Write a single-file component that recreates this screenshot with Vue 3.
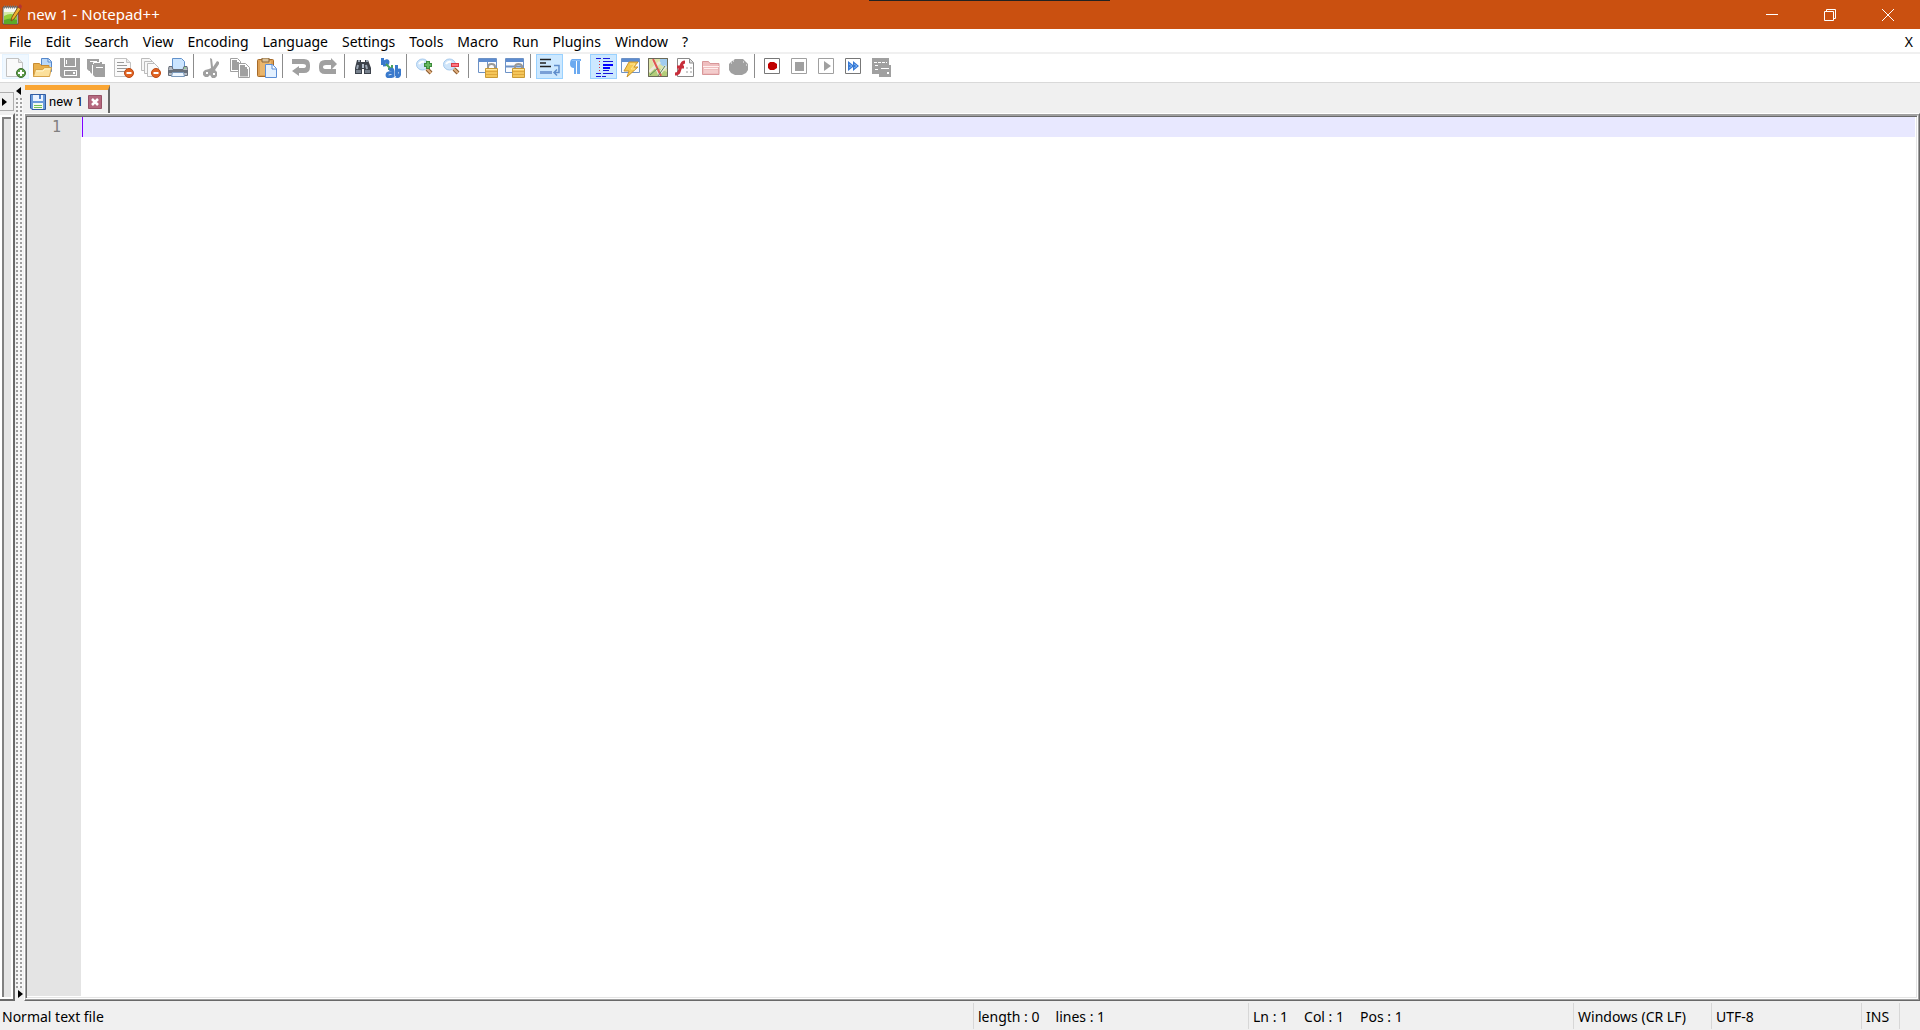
<script setup>
import { ref } from 'vue'

const menus = ['File', 'Edit', 'Search', 'View', 'Encoding', 'Language', 'Settings', 'Tools', 'Macro', 'Run', 'Plugins', 'Window', '?']
const text = ref('')

const page = '<path d="M.5.5h12l4 4v14H.5z" fill="#fafafa" stroke="#c2c2c2"/><path d="M12.5.5v4h4" fill="#e6e6e6" stroke="#c2c2c2"/>'
const minusBadge = '<circle cx="15" cy="15" r="4.500" fill="#e06423" stroke="#bd4812"/><path d="M12.500 15h5" stroke="#fff" stroke-width="2"/>'
const lens = '<ellipse cx="6.500" cy="6.500" rx="6" ry="5.500" fill="#cfe5fa" stroke="#a4c8ec"/><path d="M3 6q2-3 5-2" stroke="#fff" stroke-width="2" fill="none"/><path d="M11 11l4 4" stroke="#8c5a2c" stroke-width="4"/><path d="M11 11l4 4" stroke="#e0b080" stroke-width="2"/>'
const lock = '<path d="M10 11V9q0-3 3.500-3t3.500 3v2" fill="none" stroke="#999" stroke-width="2"/><path d="M7.500 10.500h12v9h-12z" fill="#f4c65a" stroke="#c99a36"/><path d="M8 13.500h11M8 16.500h11" stroke="#e0a83c"/><path d="M8 11.500h11" stroke="#ffe7a0"/>'
const winFrame = '<path d="M.5.5h18v14H.5z" fill="#fafcff" stroke="#6d92c6"/><path d="M1 1h17v3H1z" fill="#5d8cd0"/>'
const box = '<path d="M.5.500h15v15h-15z" fill="#fff" stroke="#777"/>'
const greyBox = '<path d="M.5.500h15v15h-15z" fill="#fff" stroke="#a0a0a0"/>'

const groups = [
  [
    { name: 'New', hover: true, art: page + '<circle cx="15" cy="15" r="4.500" fill="#5e9b48" stroke="#396e2c"/><path d="M12 15h6M15 12v6" stroke="#fff" stroke-width="2"/>' },
    { name: 'Open', art: '<path d="M8.500.5h7l3 3v10h-10z" fill="#b9d8fa" stroke="#5587ca"/><path d="M15 1v3h3" fill="#e5f2ff" stroke="#5587ca"/><path d="M.5 18.500v-13h6l1.500 2h8v11z" fill="#e9b04c" stroke="#c98c32"/><path d="M2.500 11.500h7l2-2h7l-2 9H.5z" fill="#fce09a" stroke="#d7a348"/><path d="M3 13h7l2-2h5" stroke="#fff4cb" fill="none"/>' },
    { name: 'Save', art: '<path d="M0 0h20v20H2l-2-2z" fill="#a0a0a0"/><path d="M4 0h12v9H4z" fill="#fff"/><path d="M5 0h10v8H5z" fill="#a0a0a0"/><path d="M6 2h1v4H6zM4 12h13v6H4z" fill="#fff"/><path d="M5 13h11v4H5z" fill="#a0a0a0"/><path d="M13 14h2v2h-2z" fill="#fff"/>' },
    { name: 'Save All', art: '<path d="M0 1h12v12H2l-2-2z" fill="#a0a0a0"/><path d="M3 4h12v12H5l-2-2z" fill="#a0a0a0"/><path d="M6 6h12v13H8l-2-2z" fill="#a0a0a0"/><path d="M3 3.500h7M6.500 6v-1.500H13M9 9.500h7M5.500 7v9" fill="none" stroke="#fff"/>' },
    { name: 'Close', art: page + '<path d="M3 4.500h7M3 7.500h10M3 10.500h10M3 13.500h8" stroke="#999"/>' + minusBadge },
    { name: 'Close All', art: '<path d="M.5.5h8l3 3v9H.5z" fill="#f7f7f7" stroke="#bbb"/><path d="M3.500 3.500h8l3 3v9h-11z" fill="#f7f7f7" stroke="#bbb"/><path d="M6.500 5.500h7l4 4v9h-11z" fill="#fafafa" stroke="#bbb"/>' + minusBadge },
    { name: 'Print', art: '<path d="M4.500.5h9l3 3v8h-12z" fill="#cbe5ff" stroke="#6292cb"/><path d="M1 8.500h3l1 3h10l1-3h3l.5 3v6H.5v-6z" fill="#b8bdc4" stroke="#666d78"/><path d="M1 12h18v3H1z" fill="#69717d"/><path d="M4.500 14.500h11l1 4h-13z" fill="#edf6ff" stroke="#7998bb"/><path d="M16 10h2" stroke="#78d47b"/>' }
  ],
  [
    { name: 'Cut', art: '<path d="M7 0l2 1 1 8 4-6 2 1v2l-4 6 2 2v4l-2 2h-3l-2-3v-3H7v3l-2 2H2l-2-2v-3l2-2 4-1 2-1z" fill="#a0a0a0"/><path d="M3 15h2M11 15v2" stroke="#fff" stroke-width="2"/>' },
    { name: 'Copy', art: '<path d="M.5.5h7l3 3v10H.5z" fill="#fff" stroke="#a0a0a0"/><path d="M2 3h5M2 5h7M2 7h7M2 9h7M2 11h7" stroke="#a0a0a0" stroke-width="2"/><path d="M8.500 5.500h7l4 4v10h-11z" fill="#fff" stroke="#a0a0a0"/><path d="M10 8h5M10 10h7M10 12h8M10 14h8M10 16h8M10 17.500h8" stroke="#a0a0a0" stroke-width="2"/>' },
    { name: 'Paste', art: '<rect x=".5" y="1.500" width="16" height="17" rx="1" fill="#dda054" stroke="#a66a28"/><path d="M3 3h11v14H3z" fill="#e9b66d"/><path d="M5 0h7v4H5z" fill="#d9c29b" stroke="#8b6738"/><path d="M8.500 6.500h7l4 4v9h-11z" fill="#e4f1ff" stroke="#5b8ed6"/><path d="M15 7v4h4" fill="#fff" stroke="#5b8ed6"/>' }
  ],
  [
    { name: 'Undo', art: '<path d="M0 1h12q6 0 6 6v2q0 6-6 6H7v3L0 13l7-5v2h4q3 0 3-2t-3-2H0z" fill="#a0a0a0"/>' },
    { name: 'Redo', art: '<path d="M18 6L12 0v2H6Q0 2 0 8v2q0 6 6 6h11v-5H7q-3 0-3-2t3-2h5v5z" fill="#a0a0a0"/>' }
  ],
  [
    { name: 'Find', art: '<path d="M3 2h4v2h4V2h3l3 8v6h-7v-5H8v5H1v-6z" fill="#3c424b"/><path d="M4 3h2M12 3h2M4 7l-1 4M12 7l1 4" stroke="#9aa5b2" stroke-width="2"/><path d="M2 12h5v3H2zM11 12h5v3h-5z" fill="#77818d"/><path d="M8 6h2v4H8z" fill="#b1bdca"/>' },
    { name: 'Replace', art: '<path d="M1.500 0v7M2 5q5-4 5-1T2 7" fill="none" stroke="#3979cc" stroke-width="3"/><path d="M5 6l6 6M11 7v4H7" fill="none" stroke="#4ba05a" stroke-width="2"/><path d="M8 12q4-2 4 1v5q-6 2-6-1t6-2M15.500 7v11M16 13q4-3 3 2t-4 3" fill="none" stroke="#3979cc" stroke-width="3"/>' }
  ],
  [
    { name: 'Zoom In', art: lens + '<path d="M8 7h8M12 3v8" stroke="#3c8b3b" stroke-width="4"/><path d="M9 7h6M12 4v6" stroke="#66b861" stroke-width="2"/>' },
    { name: 'Zoom Out', art: lens + '<path d="M8 7h8" stroke="#d83c48" stroke-width="4"/><path d="M9 7h6" stroke="#ff7680" stroke-width="2"/>' }
  ],
  [
    { name: 'Synchronize Vertical Scrolling', art: winFrame + '<path d="M9.500 4v10" stroke="#6d92c6"/>' + lock },
    { name: 'Synchronize Horizontal Scrolling', art: winFrame + '<path d="M1 8.500h17" stroke="#6d92c6" stroke-width="2"/>' + lock }
  ],
  [
    { name: 'Word wrap', on: true, art: '<path d="M0 1.500h11M0 5h6M0 8.500h11" stroke="#222" stroke-width="1.500"/><path d="M0 14.500h12" stroke="#7aa0d6" stroke-width="3"/><path d="M14 7.500h5v7h-4M17 11.500l-3 3 3 3" fill="none" stroke="#5f8dcc" stroke-width="1.500"/>' },
    { name: 'Show All Characters', art: '<path d="M5 1h9v2h-1v13h-3V3H9v13H7v-6q-4 0-4-4t2-5z" fill="#6caaf0"/><path d="M5 2.500h8" stroke="#8bbff8"/>' },
    { name: 'Show Indent Guide', on: true, art: '<path d="M2 .5h5M9 .5h7M9 3.500h10M9 12.500h6M2 15.500h5M9 15.500h10M2 18.500h5M8 18.500h4" stroke="#1616db"/><path d="M9 7h10M9 10h7" stroke="#00f" stroke-width="2"/><path d="M5.500 3v11" stroke="#dd3040" stroke-dasharray="1 2"/>' },
    { name: 'User Defined Language', art: winFrame + '<path d="M8 4h9l-4 5h4L6 19l2-6H3z" fill="#f6c951" stroke="#c99530"/><path d="M9 6h5l-4 5h4" fill="none" stroke="#ffe799"/>' },
    { name: 'Document Map', art: '<path d="M.5.5h19v18H.5z" fill="#dce3a6" stroke="#6b6a58"/><path d="M12 1h7v10l-7-5z" fill="#a1ccef"/><path d="M1 12l7-3 11 5v4H1z" fill="#b3cc79"/><path d="M5 1l7 17M18 8l-7 8M1 14l11-10" stroke="#ebe9da" stroke-width="3"/><path d="M5 1l8 17" stroke="#df5752" stroke-width="2"/><path d="M10 18l7-10M2 17l8-7" stroke="#598b5a"/><path d="M.5.5h19v18H.5z" fill="none" stroke="#6b6a58"/>' },
    { name: 'Function List', art: '<path d="M2.500.5h12l4 4v14h-16z" fill="#fff" stroke="#8a8a8a"/><path d="M14.500 1v4h4" fill="#ddd" stroke="#8a8a8a"/><path d="M10 4q-3 0-4 4l-2 6q-1 2-4 2M2 9h7" fill="none" stroke="#c72d3a" stroke-width="3"/><path d="M12 9v7M16 9v7" stroke="#999" stroke-dasharray="2 2"/>' },
    { name: 'Folder as Workspace', art: '<path d="M.5 16.500v-13h6l1.500 2h9v11z" fill="#efbebf" stroke="#d89799"/><path d="M1 8.500h16M2 10.500h14" stroke="#fff0ef"/><path d="M2 12h14v3H2z" fill="#f3cccc"/>' },
    { name: 'Monitoring', art: '<path d="M6 1h8l3 3 2 2v6l-2 3-4 2H6l-4-2-2-3V6l2-2z" fill="#a0a0a0"/><path d="M2 5h1M4 3h1M14 4h1M17 7h1" stroke="#fff"/>' }
  ],
  [
    { name: 'Start Recording', art: box + '<path d="M6 4h4l3 2v4l-3 2H6l-2-2V6z" fill="#c00000"/>' },
    { name: 'Stop Recording', art: greyBox + '<path d="M4 4h9v9H4z" fill="#a0a0a0"/>' },
    { name: 'Playback', art: greyBox + '<path d="M6 3l7 5-7 5z" fill="#a0a0a0"/>' },
    { name: 'Run a Macro Multiple Times', art: box + '<path d="M3 3l5 4V3l6 5-6 5V9l-5 4z" fill="#3678d4"/><path d="M4 6l3 2-3 2M9 6l3 2-3 2" fill="none" stroke="#80b5f4"/>' },
    { name: 'Save Recorded Macro', art: '<path d="M0 0h17v16H0z" fill="#a0a0a0"/><path d="M2 4.500h13M3 7.500h10M3 11.500h3" stroke="#fff" stroke-dasharray="3 1"/><path d="M7 7h12v12H7z" fill="#a0a0a0"/><path d="M9 10.500h8" stroke="#fff"/><path d="M15 14h2v2h-2z" fill="#fff"/>' }
  ]
]
</script>

<template>
  <div class="app">
    <header class="titlebar">
      <svg class="logo" width="20" height="22" viewBox="0 0 20 22">
        <path d="M1 3h15v17H1z" fill="#f7f8f2" stroke="#50545a" />
        <path d="M2 8h13v12H2z" fill="#d5eaa6" />
        <path d="M2 12q7-4 13 0v8H2z" fill="#91cf38" />
        <path d="M2 16q7-3 13 0v4H2z" fill="#5caa28" />
        <path d="M2 3h14" stroke="#777" stroke-width="3" stroke-dasharray="1 1" />
        <path d="M16 3l3 2-7 10-3 2 1-4z" fill="#eeb32d" stroke="#805119" />
        <path d="M16 3l2-3 2 2-1 3" fill="#b33434" />
      </svg>
      <span class="caption">new 1 - Notepad++</span>
      <button class="win" aria-label="Minimize"><svg width="12" height="12"><path d="M0 5.500h12" /></svg></button>
      <button class="win" aria-label="Restore"><svg width="12" height="12"><path d="M.5 2.500h9v9h-9zM2.500 2.500v-2h9v9h-2" /></svg></button>
      <button class="win" aria-label="Close"><svg width="12" height="12"><path d="M0 0l12 12M12 0L0 12" /></svg></button>
      <i class="notch"></i>
    </header>

    <nav class="menubar">
      <button v-for="m in menus" :key="m">{{ m }}</button>
      <button class="close-doc">X</button>
    </nav>

    <div class="toolbar">
      <div v-for="(g, i) in groups" :key="i" class="group">
        <button v-for="t in g" :key="t.name" class="tool" :class="{ on: t.on, hover: t.hover }" :aria-label="t.name">
          <svg width="20" height="20" viewBox="0 0 20 20" v-html="t.art"></svg>
        </button>
      </div>
    </div>

    <main class="workspace">
      <aside class="side">
        <button class="expand" aria-label="Next tab"><svg width="5" height="8"><path d="M0 0l5 4-5 4z" /></svg></button>
        <div class="side-panel"></div>
      </aside>
      <div class="splitter">
        <svg width="5" height="8"><path d="M5 0L0 4l5 4z" /></svg>
        <div class="grip"></div>
        <svg class="end" width="5" height="8"><path d="M0 0l5 4-5 4z" /></svg>
      </div>
      <section class="docs">
        <div class="tabs">
          <div class="tab">
            <svg width="16" height="16" viewBox="0 0 16 16">
              <path d="M.5.5h15v15H2l-1.500-1.500z" fill="#6a9adb" stroke="#315da3" />
              <path d="M3 1h10v6H3z" fill="#eaf3ff" /><path d="M9 1h2v4H9z" fill="#4f83cc" />
              <path d="M3 9h10v6H3z" fill="#f4faee" /><path d="M4 11.500h8M4 13.500h8" stroke="#72bf55" />
            </svg>
            <span>new 1</span>
            <button aria-label="Close new 1">
              <svg width="14" height="14"><path d="M.5.5h13v13H.5z" fill="#b5687e" stroke="#985367" /><path d="M4 4l6 6M10 4l-6 6" stroke="#fff" stroke-width="2.500" /></svg>
            </button>
          </div>
        </div>
        <div class="editor">
          <div class="view">
            <div class="gutter">1</div>
            <div class="page">
              <textarea v-model="text" aria-label="Document text" spellcheck="false"></textarea>
              <i class="caret"></i>
            </div>
          </div>
        </div>
      </section>
    </main>

    <footer class="status">
      <span class="kind">Normal text file</span>
      <span class="size"><span>length : 0</span><span>lines : 1</span></span>
      <span class="position"><span>Ln : 1</span><span>Col : 1</span><span>Pos : 1</span></span>
      <span class="eol">Windows (CR LF)</span>
      <span class="encoding">UTF-8</span>
      <span class="mode">INS</span>
      <span class="corner"></span>
    </footer>
  </div>
</template>

<style>
body { margin: 0; }
</style>

<style scoped>
* { box-sizing: border-box; }
.app { display: flex; flex-direction: column; height: 100vh; overflow: hidden; background: #f0f0f0; color: #000; font-family: "Noto Sans", "Open Sans", sans-serif; font-size: 14px; }
button { margin: 0; padding: 0; border: 0; background: none; color: inherit; font: inherit; }
svg { display: block; flex: none; }

.titlebar { position: relative; display: flex; align-items: center; flex: none; height: 29px; padding: 0 3px 0 2px; background: #ca5010; color: #fff; }
.caption { flex: 1; padding-left: 5px; font-size: 15px; line-height: 29px; }
.win { display: flex; align-items: center; justify-content: center; width: 58px; height: 28px; }
.win path { fill: none; stroke: #fff; }
.notch { position: absolute; top: 0; left: 45.25%; width: 241px; height: 1px; background: #222; }

.menubar { display: flex; flex: none; gap: 14px; height: 25px; padding: 2px 7px 0 9px; border-bottom: 2px solid #f0f0f0; background: #fff; line-height: 21px; }
.close-doc { margin-left: auto; }

.toolbar { display: flex; flex: none; height: 29px; padding-left: 2px; border-bottom: 1px solid #d9d9d9; background: #fff; }
.group { display: flex; }
.group + .group::before { content: ""; width: 1px; height: 24px; margin: 0 5px 0 2px; background: #8c8c8c; }
.tool { width: 27px; height: 25px; padding: 3px; border: 1px solid transparent; }
.tool.on { border-color: #99d1ff; background: #cce8ff; }
.tool.hover { border-color: #e5f3ff; background: #f0f8ff; }

.workspace { display: flex; flex: 1; min-height: 0; }
.side { display: flex; flex-direction: column; width: 15px; padding-top: 9px; }
.expand { display: flex; align-items: center; justify-content: center; width: 14px; height: 19px; padding-right: 4px; border: 1px solid #adadad; border-left: 0; background: #f0f0f0; }
.side-panel { flex: 1; margin-top: 2px; border: 2px solid #696969; border-left: 0; border-top-color: #f0f0f0; background: #e4e4e4; box-shadow: inset 2px 2px 0 #fff, inset -2px -2px 0 #fff, inset 4px 4px 0 #808080; }
.splitter { display: flex; flex-direction: column; width: 9px; padding: 4px 1px 3px; }
.grip { flex: 1; margin: 3px 0 2px; background: conic-gradient(from 270deg, #a0a0a0 25%, #f7f7f7 0) 0 0 / 4px 4px; }
.splitter .end { align-self: flex-end; }

.docs { display: flex; flex: 1; flex-direction: column; min-width: 0; }
.tabs { display: flex; height: 30px; padding: 2px 0 0 1px; }
.tab { display: flex; align-items: center; height: 28px; width: 85px; border-top: 5px solid #faa634; border-right: 2px solid #696969; padding-left: 5px; font-family: Roboto, sans-serif; font-size: 13px; line-height: 20px; }
.tab span { flex: 1; padding-left: 3px; }
.tab button { margin-right: 6px; }
.editor { display: flex; flex: 1; min-height: 0; padding: 1px 1px 1px 0; border: 1px solid #696969; border-top-color: #fff; border-left-color: #fff; background: #a0a0a0; }
.view { display: flex; flex: 1; padding: 1px 2px 2px 1px; border: 1px solid #fff; border-top-color: #a0a0a0; border-left-color: #a0a0a0; background: #fff; box-shadow: inset 1px 1px 0 #696969, inset -1px -1px 0 #e4e4e4; }
.gutter { width: 54px; padding-right: 20px; background: #e4e4e4; color: #808080; font: 15px/20px "DejaVu Sans Mono", monospace; text-align: right; }
.page { position: relative; display: flex; flex: 1; }
textarea { flex: 1; padding: 0 2px; border: 0; outline: 0; resize: none; background: linear-gradient(#e8e8ff, #e8e8ff) 0 0 / 100% 20px no-repeat; font: 15px/20px "DejaVu Sans Mono", monospace; }
.caret { position: absolute; top: 0; left: 1px; width: 1px; height: 20px; background: #8000ff; }

.status { display: flex; flex: none; height: 29px; padding: 2px 0 1px; background: #f0f0f0; line-height: 28px; white-space: nowrap; }
.status > span { padding-left: 4px; border-left: 1px solid #d7d7d7; }
.status > .kind { flex: 1; padding-left: 2px; border-left: 0; }
.size, .position { display: flex; gap: 16px; }
.size { width: 275px; }
.position { width: 325px; }
.eol { width: 138px; }
.encoding { width: 150px; }
.mode { width: 38px; }
.corner { width: 21px; }
</style>
